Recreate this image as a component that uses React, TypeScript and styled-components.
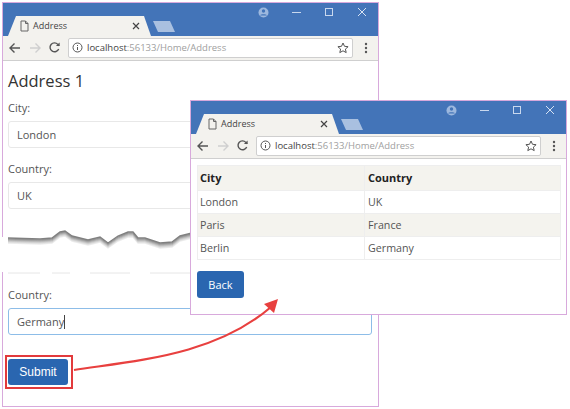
import React from "react";
import styled, { createGlobalStyle } from "styled-components";

const GlobalStyle = createGlobalStyle`
  html, body {
    margin: 0;
    padding: 0;
    background: #fff;
  }
  body {
    font-family: "Open Sans", "Liberation Sans", sans-serif;
    color: #444;
  }
`;

const Canvas = styled.div`
  position: relative;
  width: 570px;
  height: 409px;
  overflow: hidden;
  background: #fff;
`;

const Window = styled.div<{ $left: number; $top: number; $height: number }>`
  position: absolute;
  left: ${({ $left }) => $left}px;
  top: ${({ $top }) => $top}px;
  width: 377px;
  height: ${({ $height }) => $height}px;
  box-sizing: border-box;
  border: 1px solid #d8a9dc;
  background: #fff;
  display: flex;
  flex-direction: column;
`;

const TitleBar = styled.div`
  position: relative;
  height: 33px;
  flex: none;
  background: #4374b8;
  display: flex;
  align-items: flex-end;
`;

const TabShape = styled.svg`
  position: absolute;
  left: 0;
  bottom: 0;
`;

const TabInner = styled.div`
  position: relative;
  width: 147px;
  height: 20px;
  display: flex;
  align-items: center;
  color: #444;
  font-size: 9px;
  padding-left: 17px;
  gap: 4px;
  box-sizing: border-box;
`;

const TabTitle = styled.span`
  flex: 1;
  margin-top: -1px;
`;

const TabClose = styled.svg`
  margin-right: 10px;
`;

const WindowControls = styled.div`
  position: absolute;
  top: 4px;
  right: 10px;
  display: flex;
  align-items: center;
  gap: 22px;
`;

const Toolbar = styled.div`
  height: 25px;
  flex: none;
  box-sizing: border-box;
  background: #f3f2ee;
  border-bottom: 1px solid #cfcfcf;
  display: flex;
  align-items: center;
  padding: 0 10px 1px 5px;
  gap: 6px;
`;

const AddressBar = styled.div`
  flex: 1;
  height: 20px;
  box-sizing: border-box;
  margin: 0 5px 0 1px;
  background: #fff;
  border: 1px solid #cfcfcf;
  border-radius: 2px;
  display: flex;
  align-items: center;
  padding: 0 3px;
  font-size: 9.5px;
  gap: 4px;
  color: #a0a0a0;
`;

const Host = styled.span`
  color: #444;
`;

const Url = styled.span`
  flex: 1;
  white-space: nowrap;
`;

const PageBody = styled.div`
  flex: 1;
  display: flex;
  flex-direction: column;
  padding: 7px 5px 0;
`;

const TablePage = styled(PageBody)`
  padding: 6px 6px 0;
`;

const Heading = styled.h1`
  margin: 0 0 7px;
  font-size: 16.5px;
  line-height: 25px;
  font-weight: 400;
  color: #333;
`;

const Label = styled.div`
  font-size: 11px;
  line-height: 16px;
  color: #555;
  margin-bottom: 5px;
`;

const Field = styled.div<{ $focused?: boolean }>`
  height: 27px;
  width: 364px;
  box-sizing: border-box;
  border: 1px solid ${({ $focused }) => ($focused ? "#8dbde8" : "#e8e8e8")};
  border-radius: 3px;
  background: #fff;
  display: flex;
  align-items: center;
  padding-left: 8px;
  font-size: 11px;
  color: #555;
  margin-bottom: 13px;
`;

const Caret = styled.span`
  width: 1px;
  height: 14px;
  background: #444;
`;

const TearGap = styled.div`
  height: 65px;
`;

const Button = styled.button<{ $face?: string }>`
  align-self: flex-start;
  border: 0;
  border-radius: 3px;
  background: #2a66b0;
  color: #fff;
  font-family: ${({ $face }) => $face ?? '"Open Sans"'}, sans-serif;
  font-size: 12px;
  padding: 0;
  height: 27px;
`;

const SubmitFrame = styled.div`
  align-self: flex-start;
  margin: 7px 0 0 -3px;
  padding: 2px 3px 2px 1px;
  border: 2px solid #e23a3c;
  display: flex;
`;

const SubmitButton = styled(Button)`
  width: 60px;
  height: 26px;
`;

const BackButton = styled(Button)`
  width: 47px;
  margin-top: 11px;
  font-size: 11px;
`;

const Table = styled.table`
  width: 364px;
  border-collapse: collapse;
  table-layout: fixed;
  font-size: 10.7px;
  color: #555;
`;

const Cell = styled.td<{ $first?: boolean }>`
  border: 1px solid #eeeeee;
  height: 23px;
  padding: 0 2px 0 ${({ $first }) => ($first ? "2px" : "3px")};
  box-sizing: border-box;
  width: ${({ $first }) => ($first ? "167px" : "auto")};
`;

const HeadCell = styled(Cell).attrs({ as: "th" })`
  height: 25px;
  padding-bottom: 2px;
  text-align: left;
  color: #222;
  font-size: 11px;
  font-weight: 700;
  background: #f4f3ee;
`;

const Row = styled.tr<{ $striped?: boolean }>`
  background: ${({ $striped }) => ($striped ? "#f4f3ee" : "#fff")};
`;

const Overlay = styled.svg`
  position: absolute;
  left: 0;
  top: 0;
  pointer-events: none;
`;

const TabGlyph = () => (
  <svg width="9" height="12" viewBox="0 0 9 12" fill="none" stroke="#666" strokeWidth="1">
    <path d="M1 1h4.5L8 3.5V11H1z" />
    <path d="M5.5 1v2.5H8" />
  </svg>
);

const Controls = () => (
  <WindowControls>
    <svg width="11" height="11" viewBox="0 0 11 11">
      <circle cx="5.5" cy="5.5" r="5" fill="#9db8de" />
      <circle cx="5.5" cy="4" r="1.7" fill="#4374b8" />
      <path d="M2.2 8.4c.7-1.4 5.9-1.4 6.6 0z" fill="#4374b8" />
    </svg>
    <svg width="11" height="11" viewBox="0 0 11 11" stroke="#c9d8ee" strokeWidth="1">
      <path d="M1 5.5h9" />
    </svg>
    <svg width="11" height="11" viewBox="0 0 11 11" fill="none" stroke="#c9d8ee" strokeWidth="1">
      <rect x="1.5" y="1.5" width="7" height="7" />
    </svg>
    <svg width="11" height="11" viewBox="0 0 11 11" stroke="#d6e2f3" strokeWidth="1">
      <path d="M1 1l8 8M9 1l-8 8" />
    </svg>
  </WindowControls>
);

const Chrome = () => (
  <>
    <TitleBar>
      <TabShape width="180" height="20" viewBox="0 0 180 20">
        <path d="M5 20L13 0H141L148 20z" fill="#f3f2ee" />
        <path d="M150 5H167L172 16H155z" fill="#a9c0e0" />
      </TabShape>
      <TabInner>
        <TabGlyph />
        <TabTitle>Address</TabTitle>
        <TabClose width="8" height="8" viewBox="0 0 8 8" stroke="#444" strokeWidth="1.2">
          <path d="M1 1l6 6M7 1L1 7" />
        </TabClose>
      </TabInner>
      <Controls />
    </TitleBar>
    <Toolbar>
      <svg width="14" height="14" viewBox="0 0 14 14" fill="none" stroke="#555" strokeWidth="1.4">
        <path d="M12 7H2M6.5 2.5L2 7l4.5 4.5" />
      </svg>
      <svg width="14" height="14" viewBox="0 0 14 14" fill="none" stroke="#cfcfcf" strokeWidth="1.4">
        <path d="M2 7h10M7.5 2.5L12 7l-4.5 4.5" />
      </svg>
      <svg width="13" height="13" viewBox="0 0 14 14" fill="none" stroke="#555" strokeWidth="1.5">
        <path d="M11.5 8.5A4.8 4.8 0 1 1 10.6 3.6L12 5" />
        <path d="M12.5 1.5V5.5H8.5z" fill="#555" stroke="none" />
      </svg>
      <AddressBar>
        <svg width="11" height="11" viewBox="0 0 11 11" fill="none" stroke="#555" strokeWidth="1">
          <circle cx="5.5" cy="5.5" r="4.5" />
          <path d="M5.5 5v3M5.5 3v1" />
        </svg>
        <Url>
          <Host>localhost</Host>:56133/Home/Address
        </Url>
        <svg width="12" height="12" viewBox="0 0 12 12" fill="none" stroke="#555" strokeWidth="1">
          <path d="M6 1l1.5 3.3 3.6.4-2.7 2.4.8 3.5L6 8.8 2.8 10.6l.8-3.5L.9 4.7l3.6-.4z" />
        </svg>
      </AddressBar>
      <svg width="4" height="12" viewBox="0 0 4 12" fill="#555">
        <circle cx="2" cy="2" r="1.2" />
        <circle cx="2" cy="6" r="1.2" />
        <circle cx="2" cy="10" r="1.2" />
      </svg>
    </Toolbar>
  </>
);

const rows: [string, string][] = [
  ["London", "UK"],
  ["Paris", "France"],
  ["Berlin", "Germany"],
];

const tearEdge =
  "M8 238L40 239L52 238L60 232L65 231L72 236L80 238L88 240L100 237L108 243L118 236L128 232L133 232L138 238L145 238L160 243L172 242L180 236L192 233";

// shadow under the torn edge, darkest at the edge itself
const tearShades = ["#ececec", "#dcdcdc", "#c8c8c8", "#b0b0b0", "#989898", "#808080"];

const App: React.FC = () => (
  <Canvas>
    <GlobalStyle />
    <Window $left={2} $top={2} $height={405}>
      <Chrome />
      <PageBody>
        <Heading>Address 1</Heading>
        <Label>City:</Label>
        <Field>London</Field>
        <Label>Country:</Label>
        <Field>UK</Field>
        <TearGap />
        <Label>Country:</Label>
        <Field $focused>
          Germany
          <Caret />
        </Field>
        <SubmitFrame>
          <SubmitButton $face='"Liberation Sans"'>Submit</SubmitButton>
        </SubmitFrame>
      </PageBody>
    </Window>

    {/* torn paper effect across the left window */}
    <Overlay width="570" height="409" viewBox="0 0 570 409">
      <rect x="0" y="237" width="8" height="35" fill="#fff" />
      {tearShades.map((shade, i) => (
        <path
          key={shade}
          d={tearEdge}
          transform={`translate(0 ${5 - i})`}
          fill="none"
          stroke={shade}
          strokeWidth="1.4"
        />
      ))}
      <path d="M8 273H40M52 273H70M90 273H130M150 273H190" stroke="#e6e6e6" strokeWidth="1" />
    </Overlay>

    <Window $left={190} $top={100} $height={215}>
      <Chrome />
      <TablePage>
        <Table>
          <thead>
            <Row>
              <HeadCell $first>City</HeadCell>
              <HeadCell>Country</HeadCell>
            </Row>
          </thead>
          <tbody>
            {rows.map(([city, country], i) => (
              <Row key={city} $striped={i === 1}>
                <Cell $first>{city}</Cell>
                <Cell>{country}</Cell>
              </Row>
            ))}
          </tbody>
        </Table>
        <BackButton>Back</BackButton>
      </TablePage>
    </Window>

    {/* annotation arrow from Submit to the result window */}
    <Overlay width="570" height="409" viewBox="0 0 570 409">
      <path d="M74 370C140 360 215 355 271 307" fill="none" stroke="#e8403f" strokeWidth="2.2" />
      <path d="M278 299L264 304L274 313z" fill="#e8403f" />
    </Overlay>
  </Canvas>
);

export default App;
